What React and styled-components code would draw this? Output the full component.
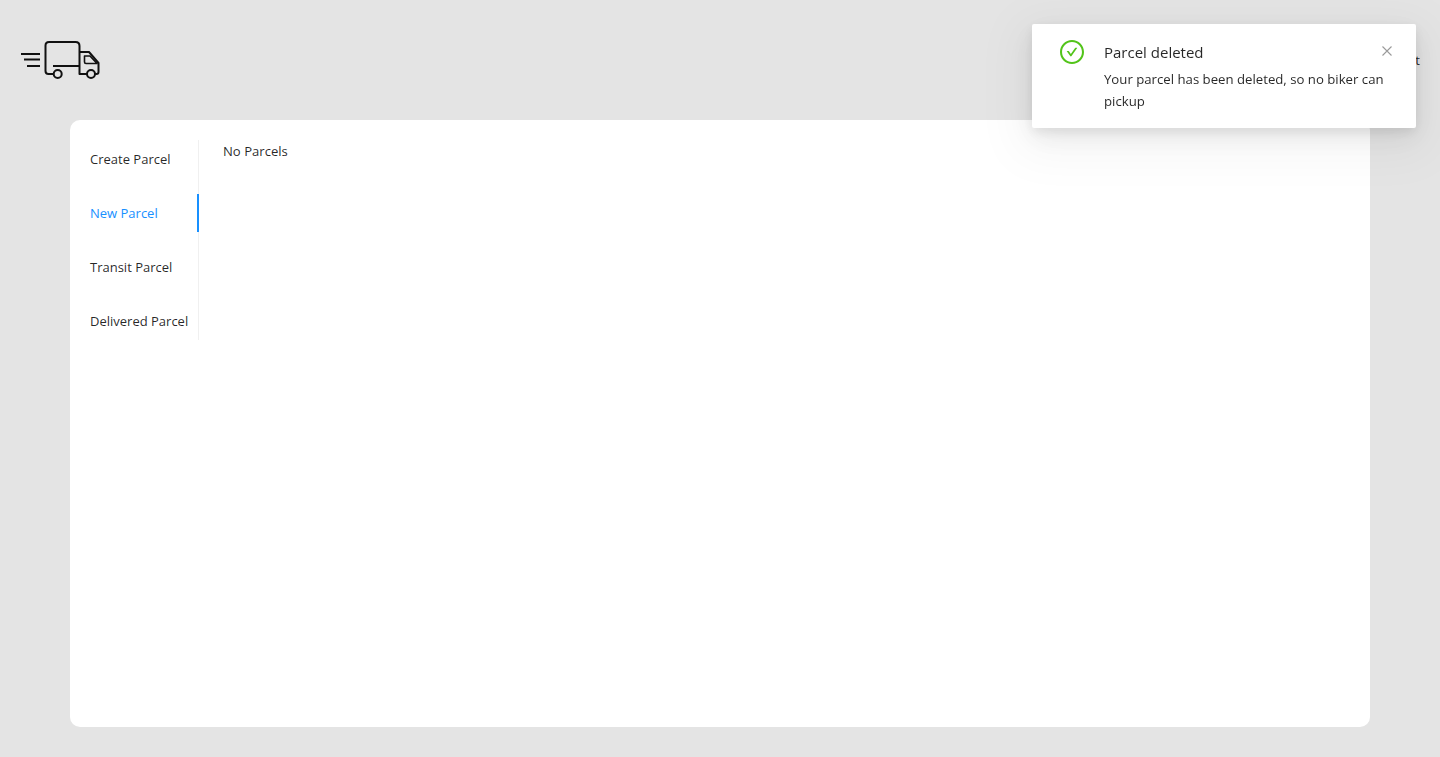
import React from 'react';
import styled, { createGlobalStyle } from 'styled-components';

const GlobalStyle = createGlobalStyle`
    html, body {
	margin: 0;
	padding: 0;
    }
    body {
	background: #e4e4e4;
	color: rgba(0, 0, 0, 0.85);
	font-family: "Open Sans", "Noto Sans", sans-serif;
	font-size: 13px;
	line-height: 22px;
    }
`;

const Page = styled.div`
    display: flex;
    flex-direction: column;
    height: 757px;
    overflow: hidden;
    box-sizing: border-box;
    padding-bottom: 30px;
`;

const Header = styled.header`
    display: flex;
    align-items: center;
    justify-content: space-between;
    flex: 0 0 120px;
    padding: 0 20px;
`;

const Logout = styled.span`
    color: rgba(0, 0, 0, 0.85);
`;

const Card = styled.main`
    flex: 1;
    display: flex;
    align-items: flex-start;
    margin: 0 70px;
    padding: 20px;
    background: #fff;
    border-radius: 10px;
`;

const TabBar = styled.nav`
    display: flex;
    flex-direction: column;
    gap: 16px;
    width: 109px;
    box-sizing: border-box;
    border-right: 1px solid #f0f0f0;
`;

const Tab = styled.div`
    height: 38px;
    padding: 8px 0;
    margin-right: -1px;
    box-sizing: border-box;
    white-space: nowrap;
    cursor: pointer;
    color: ${props => props.active ? '#1890ff' : 'rgba(0, 0, 0, 0.85)'};
    border-right: 2px solid ${props => props.active ? '#1890ff' : 'transparent'};
`;

const Content = styled.section`
    flex: 1;
    padding-left: 24px;
    font-size: 13.1px;
`;

// notification sits over the header and the card
const Toast = styled.div`
    position: fixed;
    top: 24px;
    right: 24px;
    width: 384px;
    box-sizing: border-box;
    padding: 16px 24px;
    display: flex;
    background: #fff;
    border-radius: 2px;
    box-shadow: 0 4px 12px rgba(0, 0, 0, 0.08), 0 9px 28px rgba(0, 0, 0, 0.08), 0 12px 48px 16px rgba(0, 0, 0, 0.04);
`;

const ToastIcon = styled.svg`
    flex: 0 0 24px;
    width: 24px;
    height: 24px;
    margin: 0 20px 0 4px;
    fill: #52c41a;
`;

const ToastBody = styled.div`
    flex: 1;
`;

const ToastTitle = styled.div`
    font-size: 15px;
    line-height: 24px;
    margin-bottom: 4px;
`;

const ToastText = styled.div`
    font-size: 13.2px;
    line-height: 22px;
`;

const CloseIcon = styled.svg`
    position: absolute;
    top: 22px;
    right: 24px;
    width: 10px;
    height: 10px;
    stroke: rgba(0, 0, 0, 0.4);
    stroke-width: 1.1;
    fill: none;
`;

const TruckLogo = () => (
    <svg width="80" height="40" viewBox="20 40 80 40" fill="none" stroke="#111" strokeWidth="2" strokeLinejoin="round">
	<path d="M21 54H40M24 59.5H40M27 66H40" />
	<path d="M53.5 74H48.5Q45.5 74 45.5 71V45.5Q45.5 42 49 42H75.5Q79.5 42 79.5 46V74H87" />
	<path d="M53 66H79.5" />
	<path d="M79.5 52H89L98.5 63V72Q98.5 74 96.5 74H95" />
	<path d="M84.5 56H90L97 63.5H86Q84.5 63.5 84.5 62Z" strokeWidth="1.6" />
	<circle cx="57.7" cy="74" r="4" />
	<circle cx="91" cy="74" r="4" />
    </svg>
);

const App = () => {
    const tabs = ['Create Parcel', 'New Parcel', 'Transit Parcel', 'Delivered Parcel'];
    return (
	<Page>
	    <GlobalStyle />
	    <Header>
		<TruckLogo />
		<Logout>Logout</Logout>
	    </Header>
	    <Card>
		<TabBar>
		    {tabs.map(tab => (
			<Tab key={tab} active={tab === 'New Parcel' ? true : undefined}>{tab}</Tab>
		    ))}
		</TabBar>
		<Content>No Parcels</Content>
	    </Card>
	    <Toast>
		<ToastIcon viewBox="64 64 896 896">
		    <path d="M699 353h-46.9c-10.2 0-19.9 4.9-25.9 13.3L469 584.3l-71.2-98.8c-6-8.4-15.6-13.3-25.9-13.3H325c-6.5 0-10.3 7.4-6.5 12.7l124.6 172.8a31.8 31.8 0 0 0 51.7 0l210.6-292c3.9-5.3.1-12.7-6.4-12.7z" />
		    <path d="M512 64C264.6 64 64 264.6 64 512s200.6 448 448 448 448-200.6 448-448S759.4 64 512 64zm0 820c-205.4 0-372-166.6-372-372s166.6-372 372-372 372 166.6 372 372-166.6 372-372 372z" />
		</ToastIcon>
		<ToastBody>
		    <ToastTitle>Parcel deleted</ToastTitle>
		    <ToastText>Your parcel has been deleted, so no biker can pickup</ToastText>
		</ToastBody>
		<CloseIcon viewBox="0 0 10 10">
		    <path d="M0.5 0.5L9.5 9.5M9.5 0.5L0.5 9.5" />
		</CloseIcon>
	    </Toast>
	</Page>
    );
};

export default App;
